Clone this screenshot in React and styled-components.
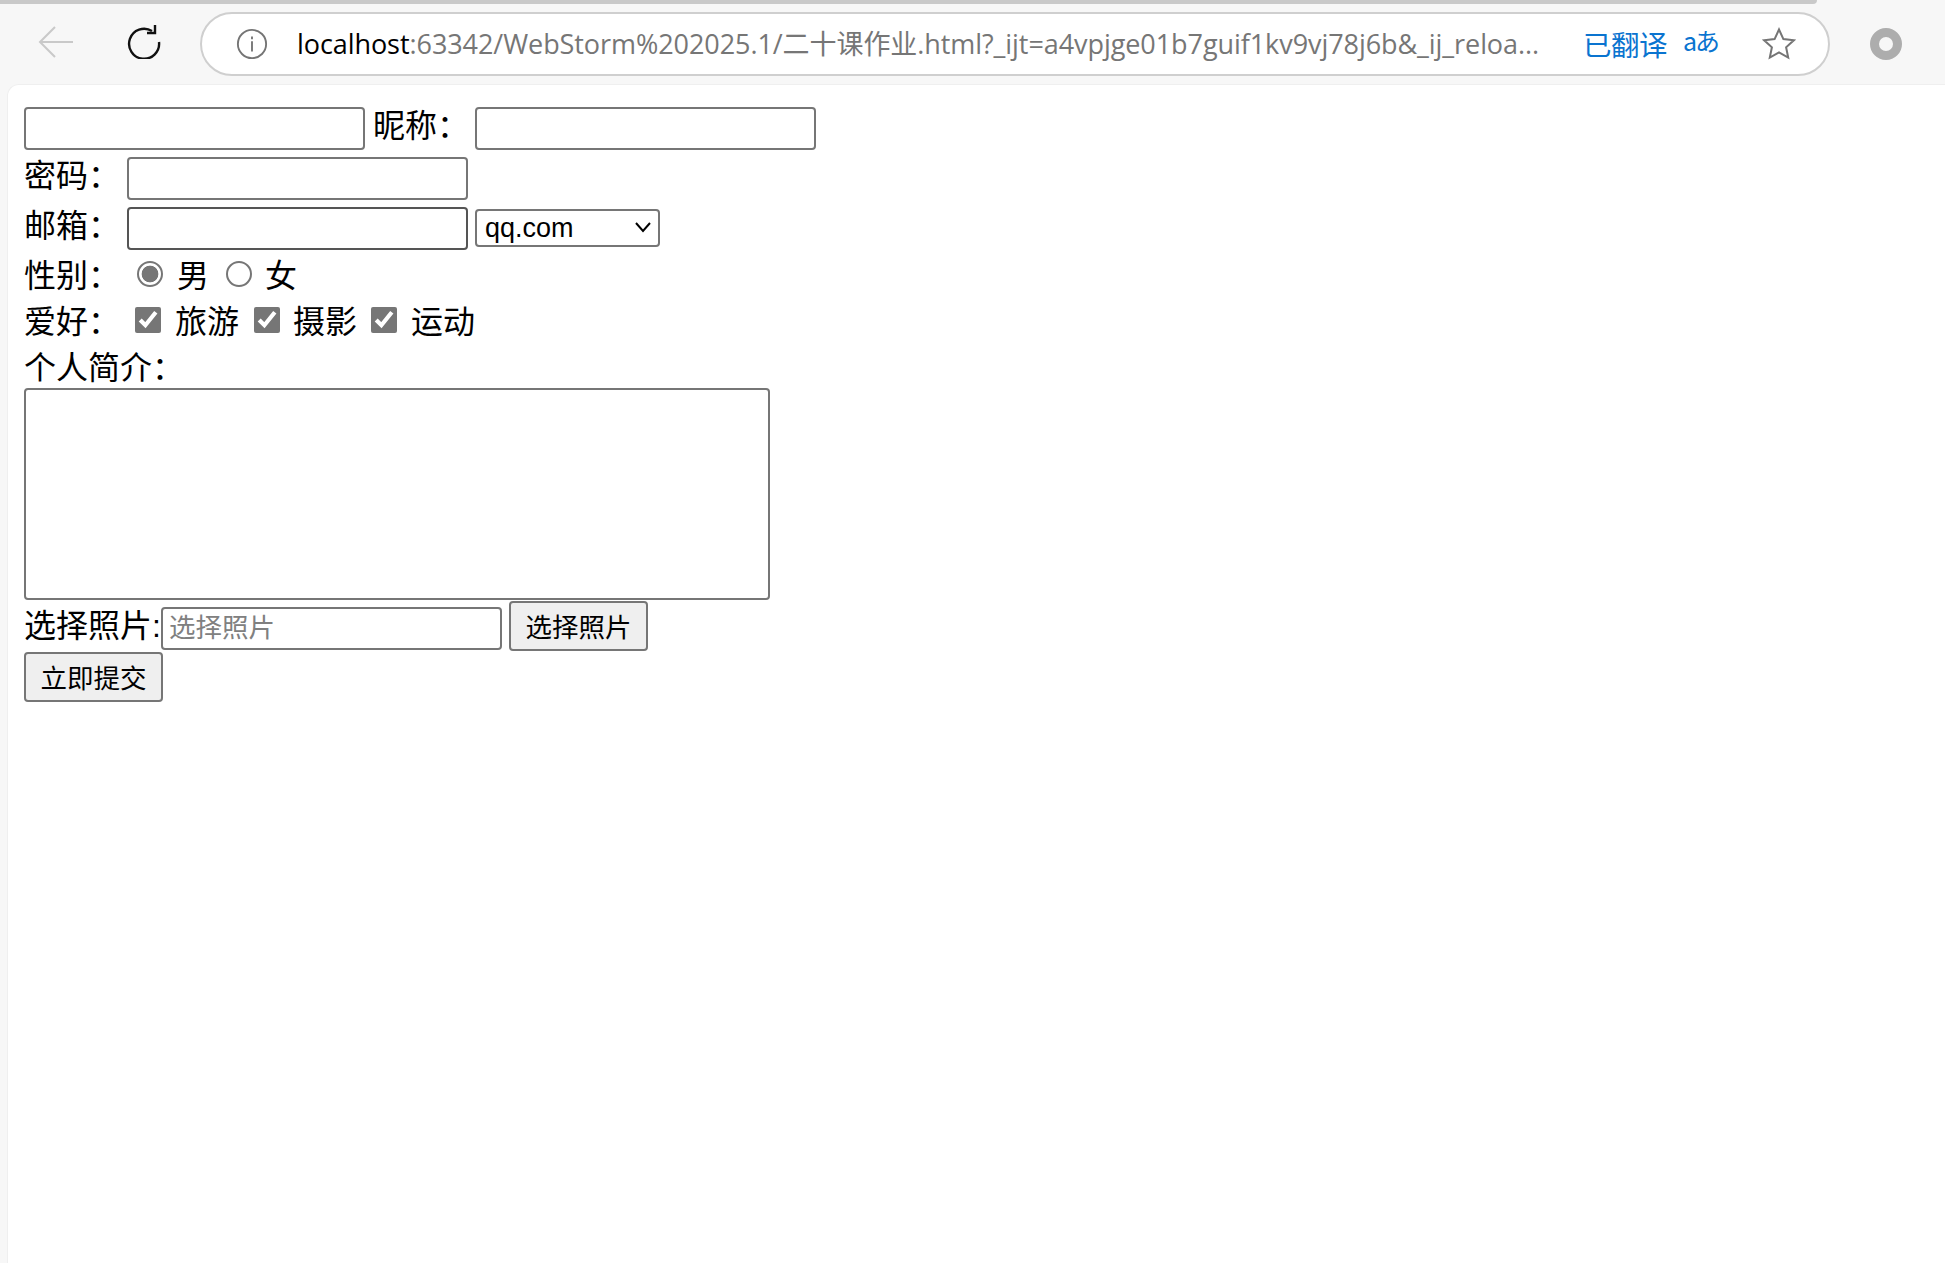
import React from "react";
import styled, { createGlobalStyle } from "styled-components";

const Global = createGlobalStyle`
  html, body { margin: 0; padding: 0; background: #f7f7f7; }
  body { font-family: "Liberation Sans", "Noto Sans CJK SC", sans-serif; color: #000; }
`;
const Shell = styled.div`
  width: 1945px; height: 1263px; display: flex; flex-direction: column; overflow: hidden; background: #f7f7f7;
`;
const LoadBar = styled.div`
  width: 1817px; height: 4px; flex: none; background: #c9c9c9; border-radius: 0 0 4px 0;
`;
const Toolbar = styled.div`
  height: 80px; flex: none; display: flex; align-items: flex-start; padding: 8px 0 0 38px; box-sizing: border-box;
`;
const NavIcon = styled.svg`
  flex: none; width: ${p => p.$w}px; height: 34px; margin: ${p => p.$m};
  fill: none; stroke: ${p => p.$c}; stroke-width: ${p => p.$sw || 2};
`;
const Address = styled.div`
  width: 1630px; height: 64px; flex: none; box-sizing: border-box; margin-left: 39px;
  display: flex; align-items: center; background: #fff; border: 2px solid #cfcfcf; border-radius: 32px; padding-left: 34px;
`;
const Url = styled.div`
  width: 1244px; margin-left: 29px; flex: none; white-space: nowrap; overflow: hidden;
  font: 27px "Open Sans", "Noto Sans CJK SC", sans-serif; letter-spacing: -0.07px; color: #767676; line-height: 40px;
  b { font-weight: 400; color: #000; }
`;
const Translated = styled.div`
  margin-left: 42px; flex: none; font: 28.5px "Noto Sans CJK SC", sans-serif; color: #0a74d0; line-height: 40px; width: 87px; white-space: nowrap; letter-spacing: -.5px;
`;
const TransGlyph = styled.div`
  margin-left: 13px; flex: none; font: 25px "Noto Sans CJK JP", sans-serif; color: #0a74d0; line-height: 36px; width: 36px; white-space: nowrap; letter-spacing: -2px; position: relative; top: -4px;
`;
const Ring = styled.div`
  flex: none; width: 32px; height: 32px; margin: 16px 0 0 40px; box-sizing: border-box; border: 9px solid #adadad; border-radius: 50%;
`;
const Page = styled.form`
  flex: 1; background: #fff; margin-left: 7px; border-radius: 12px 0 0 0; border-top: 1px solid #efefef; border-left: 1px solid #efefef;
  padding: 22px 0 0 16px; display: flex; flex-direction: column; align-items: flex-start; box-sizing: border-box;
`;
const Row = styled.div`
  display: flex; align-items: flex-start; height: ${p => p.$h}px; flex: none; margin-top: ${p => p.$top || 0}px;
`;
const Text = styled.span`
  font-size: 32px; line-height: 36px; white-space: nowrap; flex: none; width: ${p => p.$w ? p.$w + "px" : "auto"};
  margin: ${p => p.$m || "0"};
`;
const Field = styled.input`
  width: 341px; height: 43px; box-sizing: border-box; border: 2px solid ${p => p.$dark ? "#555" : "#767676"}; border-radius: 4px;
  background: #fff; padding: 2px 6px; margin: ${p => p.$m || "0"}; flex: none; outline: none;
  font: 26.5px "Liberation Sans", "Noto Sans CJK SC", sans-serif;
  &::placeholder { color: #808080; opacity: 1; }
`;
const Pick = styled.select`
  width: 185px; height: 38px; box-sizing: border-box; margin: 2px 0 0 7px; flex: none; border: 2px solid #767676; border-radius: 4px; background: #fff;
  font: 27px "Liberation Sans", sans-serif; color: #000; padding: 0 0 0 8px;
  appearance: none;
`;
const SelectWrap = styled.div`
  position: relative; flex: none; height: 40px;
  svg { position: absolute; right: 8px; top: 14px; width: 18px; height: 12px; fill: none; stroke: #000; stroke-width: 2; pointer-events: none; }
`;
const RadioDot = styled.input`
  appearance: none; width: 26px; height: 26px; box-sizing: border-box; margin: ${p => p.$m}; flex: none;
  border: 2px solid #767676; border-radius: 50%; background: #fff;
  &:checked { background: radial-gradient(circle, #767676 0 8px, #fff 8.7px); }
`;
const Check = styled.input`
  width: 26px; height: 26px; margin: ${p => p.$m}; accent-color: #767676; flex: none;
`;
const Area = styled.textarea`
  width: 746px; height: 212px; box-sizing: border-box; display: block; border: 2px solid #767676; border-radius: 4px; resize: none; margin: 0; flex: none; outline: none; background: #fff;
`;
const Btn = styled.button`
  height: ${p => p.$h}px; width: ${p => p.$w}px; flex: none; box-sizing: border-box; border: 2px solid #767676; border-radius: 4px; background: #efefef;
  font: 26.5px "Liberation Sans", "Noto Sans CJK SC", sans-serif; color: #000; padding: 0 0 2px; margin: ${p => p.$m || "0"};
`;

export default function App() {
  return (
    <Shell>
      <Global />
      <LoadBar />
      <Toolbar>
        <NavIcon $w={36} $m="13px 0 0 0" $c="#c9c9c9" viewBox="0 0 36 34">
          <path d="M35 17H2M17 2 2 17l15 15" />
        </NavIcon>
        <NavIcon $w={34} $m="13px 0 0 53px" $c="#111" $sw={2.4} viewBox="0 0 34 34">
          <path d="M25 6A15 15 0 1 0 32 17" />
          <path d="M24 0v8h-8" transform="translate(4 0)" />
        </NavIcon>
        <Address>
          <NavIcon $w={32} $m="0" $c="#757575" viewBox="0 0 34 34">
            <circle cx="17" cy="17" r="15" />
            <path d="M17 14v11M17 9v3" />
          </NavIcon>
          <Url><b>localhost</b>:63342/WebStorm%202025.1/二十课作业.html?_ijt=a4vpjge01b7guif1kv9vj78j6b&amp;_ij_reloa...</Url>
          <Translated>已翻译</Translated>
          <TransGlyph>aあ</TransGlyph>
          <NavIcon $w={34} $m="0 0 0 43px" $c="#757575" viewBox="0 0 34 34">
            <path d="M17 2.5l4.4 9.6 10.4 1.2-7.7 7 2.1 10.3L17 25.4 7.8 30.6l2.1-10.3-7.7-7 10.4-1.2z" />
          </NavIcon>
        </Address>
        <Ring />
      </Toolbar>
      <Page>
        <Row $h={50}>
          <Field />
          <Text $w={102} $m="1px 0 0 8px">昵称：</Text>
          <Field />
        </Row>
        <Row $h={50}>
          <Text $w={103} $m="1px 0 0 0">密码：</Text>
          <Field />
        </Row>
        <Row $h={50}>
          <Text $w={103} $m="1px 0 0 0">邮箱：</Text>
          <Field $dark />
          <SelectWrap>
            <Pick defaultValue="qq.com"><option>qq.com</option></Pick>
            <svg viewBox="0 0 18 12"><path d="M2 2l7 8 7-8" /></svg>
          </SelectWrap>
        </Row>
        <Row $h={46}>
          <Text $w={103} $m="1px 0 0 0">性别：</Text>
          <RadioDot type="radio" name="g" defaultChecked $m="4px 0 0 10px" />
          <Text $m="1px 0 0 14px">男</Text>
          <RadioDot type="radio" name="g" $m="4px 0 0 17px" />
          <Text $m="1px 0 0 13px">女</Text>
        </Row>
        <Row $h={46}>
          <Text $w={103} $m="1px 0 0 0">爱好：</Text>
          <Check type="checkbox" defaultChecked $m="4px 0 0 8px" />
          <Text $m="1px 0 0 14px">旅游</Text>
          <Check type="checkbox" defaultChecked $m="4px 0 0 15px" />
          <Text $m="1px 0 0 13px">摄影</Text>
          <Check type="checkbox" defaultChecked $m="4px 0 0 14px" />
          <Text $m="1px 0 0 14px">运动</Text>
        </Row>
        <Row $h={39}><Text $m="1px 0 0 0">个人简介：</Text></Row>
        <Area />
        <Row $h={51} $top={1}>
          <Text $w={137} $m="7px 0 0 0">选择照片:</Text>
          <Field placeholder="选择照片" $m="6px 0 0 0" />
          <Btn $w={139} $h={50} $m="0 0 0 7px">选择照片</Btn>
        </Row>
        <Btn $w={139} $h={50}>立即提交</Btn>
      </Page>
    </Shell>
  );
}
